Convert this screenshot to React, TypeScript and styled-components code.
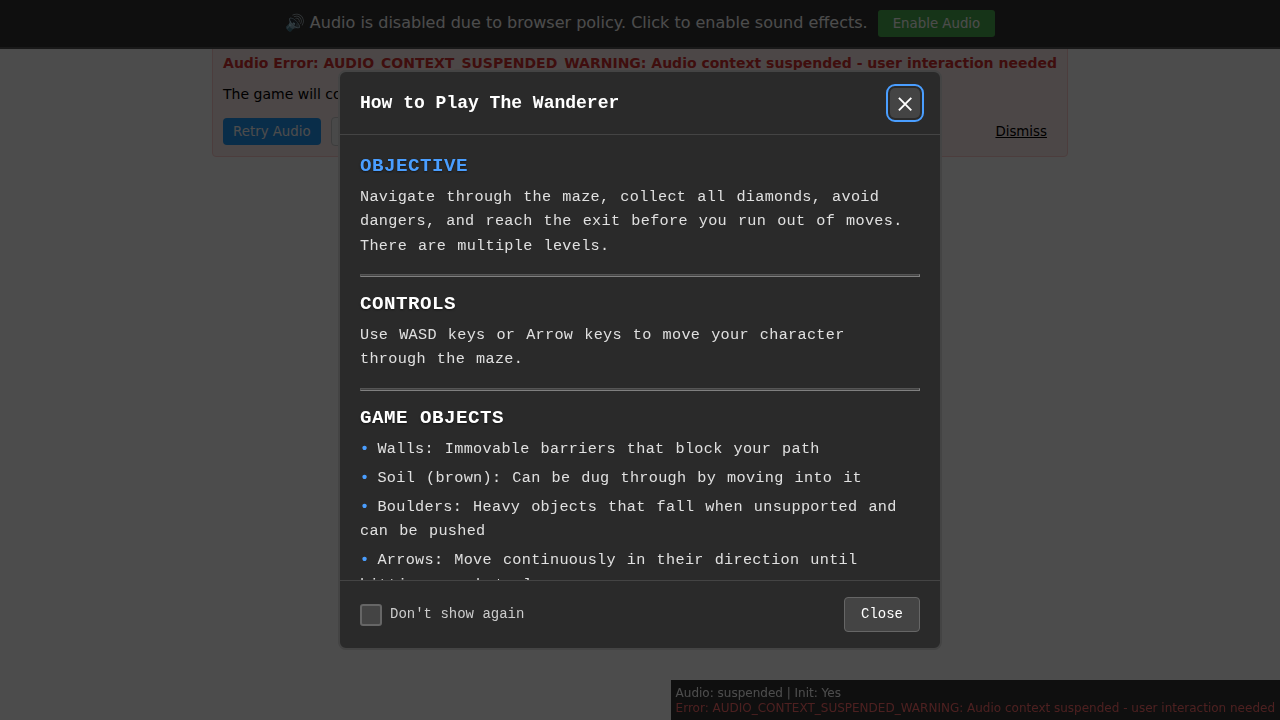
import React from "react";
import styled, { createGlobalStyle } from "styled-components";

const GlobalStyle = createGlobalStyle`
  body {
    margin: 0;
    background: #fff;
    color: #000;
    font-family: "DejaVu Sans", sans-serif;
  }
`;

const AudioBanner = styled.div`
  position: fixed;
  inset: 0 0 auto 0;
  z-index: 2;
  display: flex;
  justify-content: center;
  align-items: center;
  gap: 10px;
  padding: 10px;
  background: #333;
  border-bottom: 2px solid #555;
  color: #fff;
  font-size: 16px;
  line-height: 19px;
`;

const BannerText = styled.span`
  margin-top: -2px;
  white-space: pre;
`;

const BaseButton = styled.button`
  box-sizing: border-box;
  border: none;
  border-radius: 4px;
  font-family: inherit;
  font-size: 13.333px;
  line-height: 16px;
  cursor: pointer;
`;

const EnableButton = styled(BaseButton)`
  height: 27px;
  padding: 0 15px;
  border-radius: 3px;
  background: #4caf50;
  color: #fff;
`;

const ErrorPanel = styled.section`
  box-sizing: border-box;
  width: max-content;
  margin: 0 auto;
  padding: 54px 10px 10px;
  background: #ffefed;
  border: 1px solid #ffcccc;
  border-radius: 4px;
  font-size: 14px;
  line-height: 17px;
`;

const ErrorTitle = styled.div`
  color: #d32f2f;
  font-weight: bold;
  white-space: nowrap;
`;

const ErrorNote = styled.p`
  margin: 14px 0;
`;

const ErrorActions = styled.div`
  display: flex;
  align-items: center;
  gap: 10px;
`;

const RetryButton = styled(BaseButton)`
  height: 27px;
  padding: 0 10px;
  background: #2196f3;
  color: #fff;
`;

const OutlineButton = styled(BaseButton)`
  height: 29px;
  padding: 0 10px;
  background: #f5f5f5;
  border: 1px solid #ccc;
`;

const DismissButton = styled(BaseButton)`
  margin-left: auto;
  padding: 0 10px;
  background: none;
  text-decoration: underline;
`;

const StatusPanel = styled.aside`
  position: fixed;
  right: 0;
  bottom: 0;
  padding: 6px 5px 4px;
  background: rgba(0, 0, 0, 0.8);
  color: #fff;
  font-size: 12px;
  line-height: 15px;
  white-space: nowrap;
`;

const StatusError = styled.div`
  color: #ff6b6b;
`;

const Backdrop = styled.div`
  position: fixed;
  inset: 0;
  z-index: 10;
  display: flex;
  align-items: center;
  justify-content: center;
  background: rgba(0, 0, 0, 0.7);
`;

const Dialog = styled.div`
  display: flex;
  flex-direction: column;
  width: 600px;
  height: 576px;
  background: #2a2a2a;
  border: 2px solid #444;
  border-radius: 8px;
  color: #fff;
  font-family: "Liberation Mono", monospace;
  overflow: hidden;
`;

const DialogHeader = styled.header`
  display: flex;
  align-items: center;
  justify-content: space-between;
  padding: 16px 20px;
  border-bottom: 1px solid #444;
`;

const DialogTitle = styled.h2`
  margin: 0;
  font-size: 18px;
  line-height: 20px;
`;

const CloseIconButton = styled.button`
  display: flex;
  align-items: center;
  justify-content: center;
  width: 30px;
  height: 30px;
  padding: 0;
  border: none;
  border-radius: 5px;
  background: #444;
  color: #fff;
  outline: 2px solid #4a9eff;
  outline-offset: 2px;
`;

const DialogBody = styled.div`
  flex: 1;
  min-height: 0;
  padding: 20px;
  overflow: hidden;
  color: #e0e0e0;
  font-size: 15.2px;
  line-height: 1.6;
  letter-spacing: 0.02em;
  word-spacing: 0.1em;
`;

const SectionTitle = styled.h3<{ $accent?: boolean }>`
  margin: 0 0 8px;
  color: ${(p) => (p.$accent ? "#4a9eff" : "#fff")};
  font-size: 19.2px;
  line-height: 22px;
  letter-spacing: 0.025em;
  word-spacing: 0;
  text-shadow: 0 1px 2px rgba(0, 0, 0, 0.5);
`;

const Paragraph = styled.p`
  margin: 0;
`;

const Divider = styled.hr`
  height: 1px;
  margin: 16px 0;
  border: 1px solid;
  border-color: #555 #808080 #808080 #555;
  background: #444;
`;

const ObjectList = styled.ul`
  margin: 0;
  padding: 0;
  list-style: none;
`;

const ObjectItem = styled.li`
  margin-bottom: 4.8px;

  &::before {
    content: "•";
    margin-right: 8px;
    color: #4a9eff;
    font-weight: bold;
  }
`;

const DialogFooter = styled.footer`
  display: flex;
  align-items: center;
  justify-content: space-between;
  padding: 16px 20px;
  border-top: 1px solid #444;
`;

const CheckLabel = styled.label`
  display: flex;
  align-items: center;
  gap: 8px;
  color: #ccc;
  font-size: 14px;
  line-height: 18px;
`;

const CheckBox = styled.input`
  appearance: none;
  box-sizing: border-box;
  width: 22px;
  height: 22px;
  margin: 1px 0 0;
  background: #444;
  border: 2px solid #666;
  border-radius: 3px;
`;

const CheckText = styled.span`
  margin-top: -1px;
`;

const CloseButton = styled.button`
  padding: 8px 16px;
  background: #444;
  border: 1px solid #666;
  border-radius: 4px;
  color: #fff;
  font-family: inherit;
  font-size: 14px;
  line-height: 17px;
`;

const gameObjects = [
  "Walls: Immovable barriers that block your path",
  "Soil (brown): Can be dug through by moving into it",
  "Boulders: Heavy objects that fall when unsupported and can be pushed",
  "Arrows: Move continuously in their direction until hitting an obstacle",
];

const audioError =
  "AUDIO_CONTEXT_SUSPENDED_WARNING: Audio context suspended - user interaction needed";

export default function App() {
  return (
    <>
      <GlobalStyle />
      <AudioBanner>
        <BannerText>🔊 Audio is disabled due to browser policy. Click to enable sound effects.</BannerText>
        <EnableButton>Enable Audio</EnableButton>
      </AudioBanner>

      <ErrorPanel>
        <ErrorTitle>Audio Error: {audioError}</ErrorTitle>
        <ErrorNote>The game will continue without sound.</ErrorNote>
        <ErrorActions>
          <RetryButton>Retry Audio</RetryButton>
          <OutlineButton>Details</OutlineButton>
          <DismissButton>Dismiss</DismissButton>
        </ErrorActions>
      </ErrorPanel>

      <StatusPanel>
        <div>Audio: suspended | Init: Yes</div>
        <StatusError>Error: {audioError}</StatusError>
      </StatusPanel>

      <Backdrop>
        <Dialog role="dialog" aria-modal="true">
          <DialogHeader>
            <DialogTitle>How to Play The Wanderer</DialogTitle>
            <CloseIconButton aria-label="Close">
              <svg width="16" height="16" viewBox="0 0 16 16" fill="none" stroke="currentColor" strokeWidth="1.9">
                <path d="M1.9 2.9 L14.3 15.3 M14.3 2.9 L1.9 15.3" />
              </svg>
            </CloseIconButton>
          </DialogHeader>
          <DialogBody>
            <SectionTitle $accent>OBJECTIVE</SectionTitle>
            <Paragraph>
              Navigate through the maze, collect all diamonds, avoid dangers, and reach the exit
              before you run out of moves. There are multiple levels.
            </Paragraph>
            <Divider />
            <SectionTitle>CONTROLS</SectionTitle>
            <Paragraph>Use WASD keys or Arrow keys to move your character through the maze.</Paragraph>
            <Divider />
            <SectionTitle>GAME OBJECTS</SectionTitle>
            <ObjectList>
              {gameObjects.map((text) => (
                <ObjectItem key={text}>{text}</ObjectItem>
              ))}
            </ObjectList>
          </DialogBody>
          <DialogFooter>
            <CheckLabel>
              <CheckBox type="checkbox" />
              <CheckText>Don't show again</CheckText>
            </CheckLabel>
            <CloseButton>Close</CloseButton>
          </DialogFooter>
        </Dialog>
      </Backdrop>
    </>
  );
}
